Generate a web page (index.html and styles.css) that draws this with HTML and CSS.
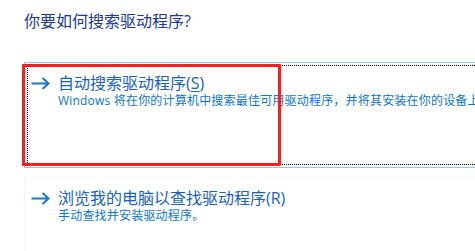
FILE: index.html
```html
<!DOCTYPE html>
<html lang="zh-CN">
<head>
<meta charset="utf-8">
<link rel="stylesheet" href="styles.css">
</head>
<body>
<div class="page">
  <h1 class="heading">你要如何搜索驱动程序?</h1>
  <div class="options">
    <div class="option option-selected">
      <div class="option-inner focus">
        <svg class="arrow" width="19" height="13" viewBox="0 0 19 13"><path d="M0.5 6.5H17.5M11.5 1L17.5 6.5L11.5 12" fill="none" stroke="#1877d3" stroke-width="2"/></svg>
        <div class="title">自动搜索驱动程序(<u>S</u>)</div>
        <div class="desc">Windows 将在你的计算机中搜索最佳可用驱动程序，并将其安装在你的设备上。</div>
      </div>
      <div class="annotation"></div>
    </div>
    <div class="option option-plain">
      <div class="option-inner">
        <svg class="arrow" width="19" height="13" viewBox="0 0 19 13"><path d="M0.5 6.5H17.5M11.5 1L17.5 6.5L11.5 12" fill="none" stroke="#1877d3" stroke-width="2"/></svg>
        <div class="title">浏览我的电脑以查找驱动程序(R)</div>
        <div class="desc">手动查找并安装驱动程序。</div>
      </div>
    </div>
  </div>
</div>
</body>
</html>
```
FILE: styles.css
```css
html, body {
  margin: 0;
  padding: 0;
  background: #ffffff;
  overflow: hidden;
}
body {
  width: 475px;
  height: 251px;
  font-family: "Open Sans", "Noto Sans CJK SC", sans-serif;
}
.page {
  padding-left: 24px;
}
.heading {
  margin: 11px 0 0 0;
  font-size: 16px;
  line-height: 20px;
  font-weight: normal;
  color: #1a3a96;
}
.options {
  margin-top: 31px;
  display: flex;
  flex-direction: column;
  gap: 9px;
}
.option {
  position: relative;
  box-sizing: border-box;
  width: 451px;
  padding: 2px 0 2px 2px;
  border: 1px solid transparent;
  border-right: none;
}
.option-selected {
  border-color: #92c5ef;
  border-right: none;
  height: 106px;
}
.option-plain {
  border-color: #f6f6f6;
  border-right: none;
  border-bottom: none;
  height: 74px;
  overflow: hidden;
}
.option-inner {
  box-sizing: border-box;
  height: 100px;
  border: 1px solid transparent;
  border-right: none;
  display: grid;
  grid-template-columns: 30px 1fr;
  grid-template-rows: 20px 16px;
  align-content: start;
  padding-top: 7px;
  overflow: hidden;
}
.option-inner.focus {
  border: 1px dotted #000000;
  border-right: none;
}
.arrow {
  grid-column: 1;
  grid-row: 1;
  align-self: center;
  margin-left: 3px;
}
.title {
  grid-column: 2;
  grid-row: 1;
  font-size: 16px;
  line-height: 20px;
  color: #1862c0;
  white-space: nowrap;
}
.title u {
  text-decoration-thickness: 1px;
  text-underline-offset: 2px;
}
.desc {
  grid-column: 2;
  grid-row: 2;
  font-size: 12px;
  line-height: 16px;
  letter-spacing: 0.2px;
  color: #0d74d4;
  white-space: nowrap;
}
.annotation {
  position: absolute;
  left: -3px;
  top: 1px;
  width: 253px;
  height: 96px;
  border: 3px solid #ff1c1c;
  border-radius: 1px;
}
```
